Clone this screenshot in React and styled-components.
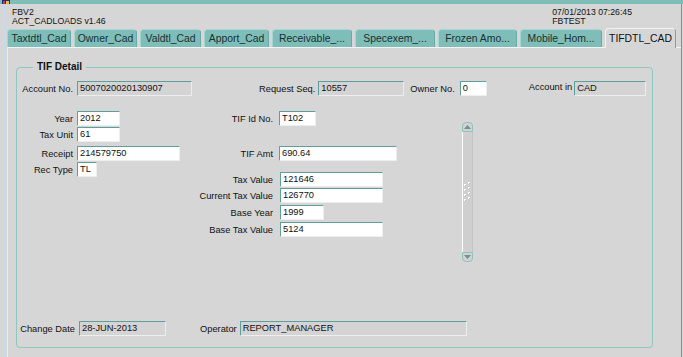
import styled, { createGlobalStyle } from 'styled-components';

const GlobalStyle = createGlobalStyle`
    html, body {
        margin: 0;
        padding: 0;
        background: #d6d6d6;
    }
    * {
        box-sizing: border-box;
    }
`;

const tabs = [
    { label: 'Taxtdtl_Cad', width: 64 },
    { label: 'Owner_Cad', width: 63 },
    { label: 'Valdtl_Cad', width: 61 },
    { label: 'Apport_Cad', width: 65 },
    { label: 'Receivable_...', width: 80 },
    { label: 'Specexem_...', width: 80 },
    { label: 'Frozen Amo...', width: 79 },
    { label: 'Mobile_Hom...', width: 82 },
    { label: 'TIFDTL_CAD', width: 71, active: true },
];

function Scroller() {
    return (
        <ScrollBar>
            <ScrollButton $up>
                <svg width="7" height="4" viewBox="0 0 7 4">
                    <path d="M0 4 L3.5 0 L7 4 Z" fill="#7a8c8c" />
                </svg>
            </ScrollButton>
            <Track>
                <svg width="7" height="22" viewBox="0 0 7 22">
                    {[0, 1, 2, 3].map((i) => (
                        <g key={i}>
                            <rect x="0" y={3 + i * 5} width="2" height="2" fill="#fff" />
                            <rect x="4" y={1 + i * 5} width="2" height="2" fill="#fff" />
                            <rect x="1" y={4 + i * 5} width="1" height="1" fill="#9fc9c6" />
                            <rect x="5" y={2 + i * 5} width="1" height="1" fill="#9fc9c6" />
                        </g>
                    ))}
                </svg>
            </Track>
            <ScrollButton>
                <svg width="7" height="4" viewBox="0 0 7 4">
                    <path d="M0 0 L3.5 4 L7 0 Z" fill="#7a8c8c" />
                </svg>
            </ScrollButton>
        </ScrollBar>
    );
}

function App() {
    return (
        <Window>
            <GlobalStyle />
            <TitleStrip>
                <svg width="8" height="4" viewBox="0 0 8 4">
                    <rect x="0" y="0" width="8" height="4" fill="#1c2c8c" />
                    <rect x="1" y="1" width="2" height="3" fill="#e03030" />
                    <rect x="4" y="1" width="3" height="3" fill="#e8c040" />
                </svg>
            </TitleStrip>
            <Frame>
                <Header>
                    <HeaderBlock>
                        <span>FBV2</span>
                        <span>ACT_CADLOADS v1.46</span>
                    </HeaderBlock>
                    <HeaderBlock>
                        <span>07/01/2013 07:26:45</span>
                        <span>FBTEST</span>
                    </HeaderBlock>
                </Header>
                <TabBar>
                    {tabs.map((t) => (
                        <Tab key={t.label} $w={t.width} $active={t.active}>
                            {t.label}
                        </Tab>
                    ))}
                </TabBar>
                <Panel>
                    <Group>
                        <Legend>TIF Detail</Legend>
                        <Row>
                            <Label $w={60}>Account No.</Label>
                            <Field $w={115} $ro>5007020020130907</Field>
                            <Label $ml={67}>Request Seq.</Label>
                            <Field $w={86} $ml={3} $ro>10557</Field>
                            <Label $ml={6}>Owner No.</Label>
                            <Field $w={27} $ml={5}>0</Field>
                            <Label $ml={42} $top>Account in</Label>
                            <Field $w={72} $ml={2} $ro>CAD</Field>
                        </Row>
                        <Body>
                            <Column $w={178}>
                                <Row>
                                    <Label $w={60}>Year</Label>
                                    <Field $w={43}>2012</Field>
                                </Row>
                                <Row $mt={1}>
                                    <Label $w={60}>Tax Unit</Label>
                                    <Field $w={43}>61</Field>
                                </Row>
                                <Row $mt={4}>
                                    <Label $w={60}>Receipt</Label>
                                    <Field $w={103}>214579750</Field>
                                </Row>
                                <Row $mt={1}>
                                    <Label $w={60}>Rec Type</Label>
                                    <Field $w={20}>TL</Field>
                                </Row>
                            </Column>
                            <Column $w={267}>
                                <Row>
                                    <Label $w={82}>TIF Id No.</Label>
                                    <Field $w={37} $ml={2}>T102</Field>
                                </Row>
                                <Row $mt={20}>
                                    <Label $w={82}>TIF Amt</Label>
                                    <Field $w={118} $ml={2}>690.64</Field>
                                </Row>
                                <Row $mt={11}>
                                    <Label $w={82}>Tax Value</Label>
                                    <Field $w={103} $ml={3}>121646</Field>
                                </Row>
                                <Row $mt={1}>
                                    <Label $w={82}>Current Tax Value</Label>
                                    <Field $w={103} $ml={3}>126770</Field>
                                </Row>
                                <Row $mt={2}>
                                    <Label $w={82}>Base Year</Label>
                                    <Field $w={44} $ml={3}>1999</Field>
                                </Row>
                                <Row $mt={2}>
                                    <Label $w={82}>Base Tax Value</Label>
                                    <Field $w={103} $ml={3}>5124</Field>
                                </Row>
                            </Column>
                            <Scroller />
                        </Body>
                        <Footer>
                            <Label $w={62}>Change Date</Label>
                            <Field $w={87} $ro>28-JUN-2013</Field>
                            <Label $ml={34}>Operator</Label>
                            <Field $w={227} $ml={3} $ro>REPORT_MANAGER</Field>
                        </Footer>
                    </Group>
                </Panel>
            </Frame>
        </Window>
    );
}

export default App;

const Window = styled.div`
    width: 683px;
    height: 357px;
    overflow: hidden;
    background: #d6d6d6;
    font-family: 'Liberation Sans', Arial, sans-serif;
    color: #111;
`;

const TitleStrip = styled.div`
    height: 4px;
    background: #7fbdb9;
    padding-left: 2px;
    display: flex;
    align-items: flex-start;
`;

const Frame = styled.div`
    width: 679px;
    height: 353px;
    margin-left: 3px;
    border-left: 2px solid #c6dbef;
    border-right: 1px solid #8c8c8c;
    display: flex;
    flex-direction: column;
`;

const Header = styled.div`
    display: flex;
    justify-content: space-between;
    padding: 4px 0 0 7px;
    height: 24px;
    width: 627px;
`;

const HeaderBlock = styled.div`
    display: flex;
    flex-direction: column;
    font-size: 8.7px;
    line-height: 9px;
    color: #111;
`;

const TabBar = styled.div`
    display: flex;
    gap: 3px;
    padding-left: 2px;
    height: 19px;
    align-items: flex-end;
`;

const Tab = styled.div`
    width: ${(p) => p.$w}px;
    height: ${(p) => (p.$active ? 20 : 18)}px;
    margin-bottom: ${(p) => (p.$active ? -1 : 0)}px;
    background: ${(p) => (p.$active ? '#d6d6d6' : '#7fbdb9')};
    border: 1px solid ${(p) => (p.$active ? '#f2f2f2' : '#a8d4d1')};
    border-right-color: ${(p) => (p.$active ? '#9a9a9a' : '#6aa9a5')};
    border-bottom: none;
    border-radius: 4px 4px 0 0;
    position: relative;
    z-index: ${(p) => (p.$active ? 2 : 1)};
    display: flex;
    align-items: center;
    justify-content: center;
    font-size: 10.4px;
    color: ${(p) => (p.$active ? '#111' : '#183030')};
    white-space: nowrap;
`;

const Panel = styled.div`
    flex: 1;
    margin-left: 2px;
    border-top: 1px solid #f4f4f4;
    border-left: 1px solid #ececec;
    padding: 13px 0 0 8px;
`;

const Group = styled.fieldset`
    margin: 0;
    width: 637px;
    height: 287px;
    border: 1px solid #8fc6c2;
    border-radius: 4px;
    padding: 8px 0 11px 0;
    display: flex;
    flex-direction: column;
`;

const Legend = styled.legend`
    margin-left: 16px;
    padding: 0 4px;
    font-size: 10px;
    font-weight: bold;
    line-height: 12px;
    color: #111;
`;

const Row = styled.div`
    display: flex;
    align-items: center;
    height: 15px;
    margin-top: ${(p) => p.$mt || 0}px;
`;

const Label = styled.span`
    width: ${(p) => (p.$w ? `${p.$w}px` : 'auto')};
    margin-left: ${(p) => p.$ml || 0}px;
    padding-right: ${(p) => (p.$w ? 4 : 0)}px;
    text-align: right;
    font-size: 9.3px;
    white-space: nowrap;
    margin-top: ${(p) => (p.$top ? -3 : 0)}px;
    color: #111;
`;

const Field = styled.div`
    width: ${(p) => p.$w}px;
    height: 15px;
    margin-left: ${(p) => p.$ml || 0}px;
    background: ${(p) => (p.$ro ? '#d4d4d4' : '#ffffff')};
    border-top: 1px solid #5e9f9b;
    border-left: 1px solid #5e9f9b;
    border-right: 1px solid #eeeeee;
    border-bottom: 1px solid #eeeeee;
    border-radius: 1px;
    font-size: 9.3px;
    line-height: 13px;
    padding-left: 2px;
    white-space: nowrap;
    overflow: hidden;
    color: #111;
`;

const Body = styled.div`
    display: flex;
    margin-top: 15px;
`;

const Column = styled.div`
    width: ${(p) => p.$w}px;
    display: flex;
    flex-direction: column;
`;

const Footer = styled.div`
    display: flex;
    align-items: center;
    height: 15px;
    margin-top: auto;
`;

const ScrollBar = styled.div`
    margin-top: 11px;
    width: 11px;
    height: 140px;
    display: flex;
    flex-direction: column;
`;

const ScrollButton = styled.div`
    height: 10px;
    display: flex;
    align-items: center;
    justify-content: center;
    background: #d2d2d2;
    border: 1px solid #8cc4c0;
    border-radius: ${(p) => (p.$up ? '4px 4px 0 0' : '0 0 4px 4px')};
`;

const Track = styled.div`
    flex: 1;
    background: #cfcfcf;
    border-left: 1px solid #ffffff;
    border-right: 1px solid #c4c4c4;
    display: flex;
    align-items: center;
    justify-content: center;
`;
